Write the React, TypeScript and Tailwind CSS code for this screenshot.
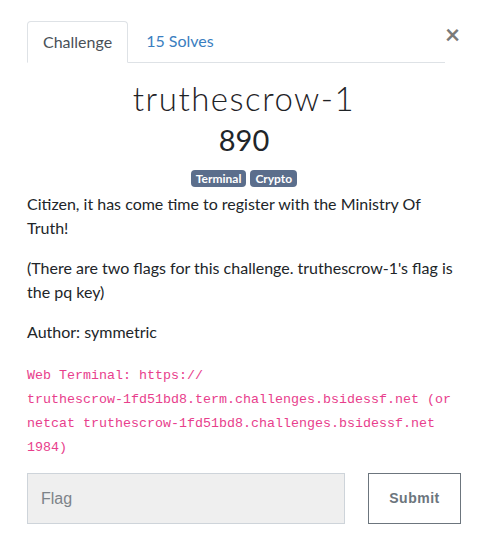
export default function App() {
  return (
    <div className="min-h-[556px] w-[485px] bg-white font-['Lato','Noto_Sans',sans-serif] text-[#212529]">
      <div className="pl-[27px] pr-[24px] pt-[21px]">
        <div className="flex items-start">
          <nav className="flex w-[420px] border-b border-[#dee2e6]">
            <div className="-mb-px rounded-t border border-[#dee2e6] border-b-white bg-white px-[15px] py-[8px] text-[16px] leading-[24px] text-[#495057]">
              Challenge
            </div>
            <div className="px-[18px] py-[8px] text-[16px] leading-[24px] text-[#3a7ec0]">
              15 Solves
            </div>
          </nav>
          <button className="ml-auto mr-[1px] text-[26px] font-bold leading-[26px] text-[#7a7a7a]">
            ×
          </button>
        </div>

        <div className="pt-[15px] text-center">
          <h2 className="text-[33px] font-light leading-[40px] tracking-[1.5px] text-[#1f2326]">
            truthescrow-1
          </h2>
          <h3 className="mt-[4px] text-[29px] leading-[36px] text-[#212529]">890</h3>
          <div className="mt-[12px] flex justify-center gap-[4px]">
            <span className="rounded-[4px] bg-[#5b6e8c] px-[5px] text-[12px] font-bold leading-[17px] text-white">
              Terminal
            </span>
            <span className="rounded-[4px] bg-[#5b6e8c] px-[5px] text-[12px] font-bold leading-[17px] text-white">
              Crypto
            </span>
          </div>
        </div>

        <div className="pt-[5px] text-[16px] leading-[24px]">
          <p>Citizen, it has come time to register with the Ministry Of Truth!</p>
          <p className="mt-[16px]">
            (There are two flags for this challenge. truthescrow-1's flag is the pq key)
          </p>
          <p className="mt-[16px]">Author: symmetric</p>
          <p className="mt-[20px] font-['Liberation_Mono',monospace] text-[13.33px] leading-[24px] text-[#e83e8c]">
            Web Terminal: https://
            <br />
            truthescrow-1fd51bd8.term.challenges.bsidessf.net (or
            <br />
            netcat truthescrow-1fd51bd8.challenges.bsidessf.net
            <br />
            1984)
          </p>
        </div>

        <div className="mt-[13px] flex items-center">
          <input
            placeholder="Flag"
            className="h-[51px] w-[318px] border border-[#ced4da] bg-[#efefef] px-[13px] font-['Liberation_Sans',sans-serif] text-[16px] text-[#495057] placeholder:text-[#7d8389]"
          />
          <button className="ml-auto h-[51px] w-[93px] border border-[#6c757d] bg-white font-['Liberation_Sans',sans-serif] text-[14px] font-bold tracking-[0.5px] text-[#6c757d]">
            Submit
          </button>
        </div>
      </div>
    </div>
  );
}
